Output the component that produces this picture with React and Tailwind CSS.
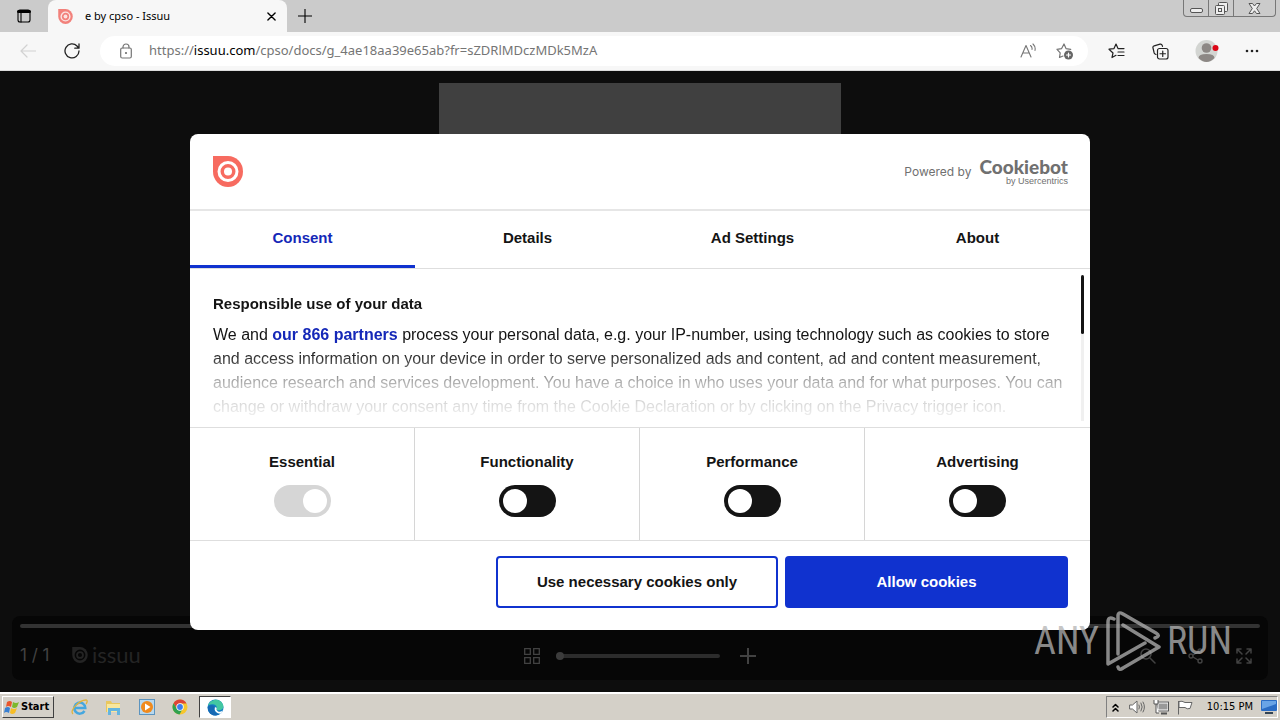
const Mark = ({ className }) => (
  <svg viewBox="0 0 30 31" className={className} fill="none" aria-hidden="true">
    <path d="M0 0h15a15 15.500 0 1 1-15 15.500z" fill="currentColor" />
    <circle cx="15" cy="15.500" r="9" stroke="var(--ring)" strokeWidth="3" />
    <circle cx="15" cy="15.500" r="4" fill="var(--ring)" />
  </svg>
)

const line = { fill: 'none', stroke: 'currentColor', strokeLinecap: 'round', strokeLinejoin: 'round' }

function TabStrip() {
  return (
    <header className="flex h-8 bg-[#cbcbcb]">
      <button aria-label="Tab actions" className="flex w-12 items-center justify-center">
        <svg viewBox="0 0 14 14" className="size-[14px]" {...line} strokeWidth="1.1">
          <rect x="1" y="1" width="12" height="12" rx="2" />
          <path d="M1.500 2.500h11" strokeWidth="3" />
          <path d="M4 4v9" />
        </svg>
      </button>
      <div className="flex w-[239px] items-center gap-3 rounded-t-lg bg-[#f7f7f7] px-[10px]">
        <Mark className="size-[15px] text-[#f2817b] [--ring:#fbe3e1]" />
        <span className="flex-1 font-['Noto_Sans',sans-serif] text-[11px]">e by cpso - Issuu</span>
        <button aria-label="Close tab" className="flex size-3 items-center justify-center">
          <svg viewBox="0 0 10 10" className="size-[9px]" {...line} strokeWidth="1.5"><path d="M1 1l8 8M9 1L1 9" /></svg>
        </button>
      </div>
      <button aria-label="New tab" className="flex w-9 items-center justify-center">
        <svg viewBox="0 0 14 14" className="size-[14px]" {...line} strokeWidth="1.1"><path d="M7 0v14M0 7h14" /></svg>
      </button>
      <div className="mr-1 ml-auto flex h-[17px] rounded-b-[4px] border border-t-0 border-[#777] text-[#555]">
        <button aria-label="Minimize" className="flex w-[25px] items-end justify-center border-r border-[#777] pb-[3px]">
          <svg viewBox="0 0 13 5" className="h-[5px] w-[13px]" fill="#eee" stroke="currentColor"><rect x=".5" y=".5" width="12" height="4" rx="1.5" /></svg>
        </button>
        <button aria-label="Restore" className="flex w-[25px] items-center justify-center border-r border-[#777]">
          <svg viewBox="0 0 13 13" className="size-[13px]" fill="#eee" stroke="currentColor"><rect x="3.500" y=".5" width="9" height="9" rx="1" /><rect x=".5" y="3.500" width="9" height="9" rx="1" /><rect x="3.500" y="6.500" width="3" height="3" /></svg>
        </button>
        <button aria-label="Close window" className="flex w-[41px] items-center justify-center">
          <svg viewBox="0 0 13 11" className="h-[11px] w-[13px]" fill="#eee" stroke="currentColor"><path d="M1 .5h3.500l2 2.500 2-2.500H12L8.700 5.500l3.300 5H8.500l-2-2.700-2 2.700H1l3.300-5z" /></svg>
        </button>
      </div>
    </header>
  )
}

function Toolbar() {
  return (
    <div className="flex h-[39px] items-center border-b border-[#dcdcdc] bg-[#f7f7f7]">
      <button aria-label="Back" className="ml-5 text-[#d2d2d2]">
        <svg viewBox="0 0 16 14" className="h-[14px] w-4" {...line} strokeWidth="1.2"><path d="M15.500 7H1M7 1L1 7l6 6" /></svg>
      </button>
      <button aria-label="Refresh" className="ml-7 text-[#222]">
        <svg viewBox="0 0 16 16" className="size-4" {...line} strokeWidth="1.3"><path d="M15 8a7 7 0 1 1-2-5l1.500 1.800M15 1v4.200h-4.200" /></svg>
      </button>
      <div className="ml-5 flex h-[30px] min-w-0 flex-1 items-center rounded-full bg-white pr-[14px] pl-5 text-[#757575]">
        <svg viewBox="0 0 12 16" className="h-4 w-3 shrink-0" {...line} strokeWidth="1.2"><rect x=".7" y="5" width="10.600" height="10" rx="1.500" /><path d="M3 5V4a3 3 0 0 1 6 0v1" /><circle cx="6" cy="10" r=".5" fill="currentColor" /></svg>
        <div className="ml-[17px] flex-1 truncate font-['Noto_Sans',sans-serif] text-[13px]">
          https://<span className="text-black">issuu.com</span>/cpso/docs/g_4ae18aa39e65ab?fr=sZDRlMDczMDk5MzA
        </div>
        <button aria-label="Read aloud">
          <svg viewBox="0 0 16 16" className="size-4" {...line} strokeWidth="1.1"><path d="M1 14L6 2.500 11 14M2.700 10h6.600M10.500 2.500a4 4 0 0 1 1.500 4M13 1a7 7 0 0 1 2 6.500" /></svg>
        </button>
        <button aria-label="Add to favorites" className="ml-5">
          <svg viewBox="0 0 18 17" className="h-[17px] w-[18px]" {...line} strokeWidth="1.200"><path d="M7 13l-3.500 1.500.7-4.700L1 6.300l4.500-.6L8 1l2 4.600 4.700.7" /><circle cx="12.500" cy="12" r="4.500" fill="#666" stroke="none" /><path d="M12.500 10v4M10.500 12h4" stroke="#fff" /></svg>
        </button>
      </div>
      <div className="ml-5 flex items-center text-[#222]">
        <button aria-label="Favorites">
          <svg viewBox="0 0 17 16" className="h-4 w-[17px]" {...line} strokeWidth="1.200"><path d="M4 14.500L5 10 1 6.200l5-.6L8 1l2 4.600h6M4 14.500l4-2.200M10 9h6M10 12.500h6" /></svg>
        </button>
        <button aria-label="Collections" className="ml-[27px]">
          <svg viewBox="0 0 17 17" className="size-[17px]" {...line} strokeWidth="1.200"><path d="M4 11.500Q2.500 11 2.200 10L1 5a1.800 1.800 0 0 1 1.200-2.200L8 1.200a1.800 1.800 0 0 1 2.200 1.200l.3 1" /><rect x="5.500" y="5.500" width="10.500" height="10.500" rx="2" /><path d="M10.750 8v5.500M8 10.750h5.500" /></svg>
        </button>
        <button aria-label="Profile" className="ml-[26px]">
          <svg viewBox="0 0 24 24" className="size-6"><circle cx="11.500" cy="12" r="11" fill="#d3d5d2" /><circle cx="11.500" cy="9" r="4.800" fill="#8d8885" /><path d="M3.500 19q0-4 8-4t8 4q-8 8-16 0z" fill="#8d8885" /><circle cx="20.500" cy="9" r="3" fill="#dc0716" /></svg>
        </button>
        <button aria-label="Settings and more" className="mr-[21px] ml-[26px]">
          <svg viewBox="0 0 14 4" className="h-1 w-[14px]" fill="currentColor"><circle cx="2" cy="2" r="1.300" /><circle cx="7" cy="2" r="1.300" /><circle cx="12" cy="2" r="1.300" /></svg>
        </button>
      </div>
    </div>
  )
}

function Viewer() {
  return (
    <div className="flex flex-1 flex-col px-3 pt-3 pb-3 text-[#424242]">
      <div className="mx-auto w-[402px] flex-1 bg-[#404040]" />
      <div className="rounded-lg bg-[#060606] px-2 pt-2 pb-3">
        <div className="h-1 rounded-full bg-[#333]" />
        <div className="flex h-10 items-end">
          <div className="flex flex-1 items-center">
            <span className="w-[52px] font-['Inter',sans-serif] text-[17px]">1 / 1</span>
            <a href="#issuu" className="flex items-center gap-1 text-[#242424] [--ring:#060606]">
              <Mark className="size-4" />
              <span className="font-['Lato',sans-serif] text-[22px] leading-6">issuu</span>
            </a>
          </div>
          <div className="flex h-6 items-center">
            <button aria-label="Show pages">
              <svg viewBox="0 0 16 16" className="size-4" fill="none" stroke="currentColor" strokeWidth="1.300"><path d="M.7.7h5.600v5.600H.7zM9.700.7h5.600v5.600H9.700zM.7 9.700h5.600v5.600H.7zM9.700 9.700h5.600v5.600H9.700z" /></svg>
            </button>
            <input aria-label="Zoom" type="range" defaultValue="0" className="mr-5 ml-4 h-1 w-[164px] appearance-none rounded-full bg-[#2c2c2c] [&::-webkit-slider-thumb]:size-2 [&::-webkit-slider-thumb]:appearance-none [&::-webkit-slider-thumb]:rounded-full [&::-webkit-slider-thumb]:bg-[#3c3c3c]" />
            <button aria-label="Zoom in">
              <svg viewBox="0 0 16 16" className="size-4" stroke="currentColor" strokeWidth="2"><path d="M8 0v16M0 8h16" /></svg>
            </button>
          </div>
          <div className="flex h-6 flex-1 items-center justify-end gap-8">
            <button aria-label="Search"><svg viewBox="0 0 16 16" className="size-4" {...line} strokeWidth="1.500"><circle cx="6" cy="6" r="5" /><path d="M10 10l5 5" /></svg></button>
            <button aria-label="Share"><svg viewBox="0 0 16 16" className="size-4" {...line} strokeWidth="1.400"><circle cx="3" cy="8" r="2" /><circle cx="12" cy="3" r="2" /><circle cx="12" cy="13" r="2" /><path d="M5 7l5-3M5 9l5 3" /></svg></button>
            <button aria-label="Full screen" className="mr-2"><svg viewBox="0 0 16 16" className="size-4" {...line} strokeWidth="1.500"><path d="M1 5V1h4M1 1l5 5M11 1h4v4M15 1l-5 5M1 11v4h4M1 15l5-5M15 11v4h-4M15 15l-5-5" /></svg></button>
          </div>
        </div>
      </div>
    </div>
  )
}

const tabs = ['Consent', 'Details', 'Ad Settings', 'About']
const groups = ['Essential', 'Functionality', 'Performance', 'Advertising']

function ConsentDialog() {
  return (
    <section role="dialog" aria-label="Cookie consent" className="w-full max-w-[900px] overflow-hidden rounded-lg bg-white font-['Liberation_Sans',Arial,sans-serif] text-[#141414]">
      <div className="flex h-[77px] items-center justify-between border-b-2 border-[#e6e6e6] pr-[22px] pl-[23px]">
        <Mark className="h-[31px] w-[30px] text-[#f76b60] [--ring:#fff]" />
        <div className="flex items-center gap-2 text-[#707070]">
          <span className="pt-[2px] font-['Inter',sans-serif] text-[12px]">Powered by</span>
          <div className="flex flex-col items-end">
            <span className="font-['Lato',sans-serif] text-[19px] leading-[19px] font-black">Cookiebot</span>
            <span className="font-['Liberation_Sans',sans-serif] text-[9px] leading-[10px]">by Usercentrics</span>
          </div>
        </div>
      </div>
      <div role="tablist" className="grid h-[58px] grid-cols-4 border-b border-[#dedede] text-[15px] font-bold">
        {tabs.map((t, i) => (
          <button key={t} role="tab" aria-selected={i === 0} className={i === 0 ? 'border-b-3 border-[#1032cf] pt-[2px] text-[#1528b8]' : 'border-b-3 border-transparent pt-[2px]'}>{t}</button>
        ))}
      </div>
      <div className="flex h-[158px] pr-[6px]">
        <div className="h-full flex-1 overflow-hidden mask-[linear-gradient(#000_52%,rgb(0_0_0/0.3)_73%,rgb(0_0_0/0.06)_94%)] pt-[23px] pr-3 pl-[23px]">
          <h2 className="text-[15px] leading-6 font-bold">Responsible use of your data</h2>
          <p className="mt-[7px] text-[16px] leading-6">
            We and <a href="#partners" className="font-bold text-[#1528b8]">our 866 partners</a> process your personal data, e.g. your IP-number, using technology such as cookies to store and access information on your device in order to serve personalized ads and content, ad and content measurement, audience research and services development. You have a choice in who uses your data and for what purposes. You can change or withdraw your consent any time from the Cookie Declaration or by clicking on the Privacy trigger icon.
          </p>
        </div>
        <div className="my-[6px] w-[3px] bg-[#f0f0f0]"><div className="h-[59px] rounded-full bg-[#141414]" /></div>
      </div>
      <div className="grid h-[114px] grid-cols-4 divide-x divide-[#d6d6d6] border-y border-[#dedede]">
        {groups.map((g, i) => (
          <label key={g} className="flex flex-col items-center gap-[14px] pt-[25px] text-[15px] leading-[18px] font-bold">
            {g}
            <input type="checkbox" role="switch" defaultChecked={i === 0} disabled={i === 0} className="flex h-8 w-[57px] appearance-none items-center rounded-full bg-[#141414] px-1 before:size-6 before:rounded-full before:bg-white checked:justify-end disabled:bg-[#d6d6d6]" />
          </label>
        ))}
      </div>
      <div className="flex h-[89px] items-start justify-end gap-[7px] pt-[15px] pr-[22px] text-[15px] font-bold">
        <button className="h-[52px] w-[282px] rounded-[4px] border-2 border-[#1032cf] pt-px">Use necessary cookies only</button>
        <button className="h-[52px] w-[283px] rounded-[4px] bg-[#1032cf] pt-px text-white">Allow cookies</button>
      </div>
    </section>
  )
}

function Watermark() {
  return (
    <div className="pointer-events-none absolute right-12 bottom-[20px] flex items-center gap-[6px] font-['Noto_Sans_ExtraCondensed','Roboto_Condensed','Open_Sans_Condensed','Liberation_Sans',sans-serif] text-[38px] leading-none text-[#b4b4b4]/75">
      <span>ANY</span>
      <svg viewBox="0 0 56 62" className="h-[62px] w-14" {...line} strokeWidth="3.500">
        <path d="M9 9Q3 6 3 12v42l37-21M13 44V6q0-5 5-2l33 19q5 3-1 5M18 15l36 22-36 21q-4 3-5-1" />
      </svg>
      <span>RUN</span>
    </div>
  )
}

const Edge = () => (
  <svg viewBox="0 0 18 18" className="size-[17px]">
    <circle cx="9" cy="9" r="8.500" fill="#137dc5" />
    <path d="M1 7C3 0 14-2 17 6c2 6-5 7-7 5 2-5-4-7-9-4z" fill="#43c7a1" />
    <path d="M10 11c1 3 5 3 7 1l-2 3.500c-4 .5-8-3-7-6.500 1-1 3 0 2 2z" fill="#fff" />
    <path d="M1 8c5-3 8 0 7 2-1 3 2 6 5 6-5 4-13 0-12-8z" fill="#1769b4" />
  </svg>
)

function Taskbar() {
  return (
    <footer className="flex h-7 items-center border-t-2 border-white bg-[#d4d0c8] pl-[2px] font-['DejaVu_Sans_Condensed','DejaVu_Sans',sans-serif] text-[11px] text-black">
      <button className="flex h-[22px] w-[52px] items-center gap-px border border-t-white border-r-[#404040] border-b-[#404040] border-l-white pl-px text-[11px] font-bold">
        <svg viewBox="0 0 16 15" className="h-[15px] w-4 shrink-0"><path d="M3 2q3-2 5 0L7 7Q4 5 2 7z" fill="#e9552b" /><path d="M9 2q3 2 6 0l-2 5q-3 2-5 0z" fill="#7db82b" /><path d="M1 8q3-2 5 0l-1 5q-3-2-5 0z" fill="#3980d2" /><path d="M7 8q3 2 6 0l-2 5q-3 2-5 0z" fill="#f7bd25" /></svg>
        Start
      </button>
      <div className="ml-[17px] flex items-center gap-[17px]">
        <button aria-label="Internet Explorer">
          <svg viewBox="0 0 17 17" className="size-[17px]" fill="none"><path d="M13.500 12a5.500 5.500 0 1 1 .8-3H4" stroke="#45a7df" strokeWidth="2.500" /><path d="M2 15C-2 12 8 1 15 1c2 0 1 3 0 4" stroke="#e0b33c" strokeWidth="1.300" /></svg>
        </button>
        <button aria-label="Explorer">
          <svg viewBox="0 0 17 17" className="size-[17px]"><path d="M1 2h5l1 2h8v9H1z" fill="#e9c75e" /><path d="M2 5h13v8H2z" fill="#f8e79d" /><path d="M3 9h12v7h-3v-4H6v4H3z" fill="#64b5df" /></svg>
        </button>
        <button aria-label="Media Player">
          <svg viewBox="0 0 16 16" className="size-4"><rect x=".5" y=".5" width="15" height="15" fill="#b8d8ee" stroke="#5c94bf" /><circle cx="8" cy="8" r="6" fill="#f08a1d" /><path d="M6 4.500l5.500 3.500L6 11.500z" fill="#fff" /></svg>
        </button>
        <button aria-label="Chrome">
          <svg viewBox="0 0 16 16" className="size-4"><circle cx="8" cy="8" r="7.500" fill="#f6c62d" /><path d="M1.500 4.200A7.500 7.500 0 0 1 14.500 4.500H8L5 10z" fill="#dc4437" /><path d="M1.500 4.200L5 10l5 1-2.500 4.500A7.500 7.500 0 0 1 1.500 4.200z" fill="#2fa150" /><circle cx="8" cy="8" r="3.700" fill="#fff" /><circle cx="8" cy="8" r="2.900" fill="#3b7ded" /></svg>
        </button>
      </div>
      <button aria-label="Edge" className="ml-[11px] flex h-[22px] w-8 items-center justify-center border border-t-[#404040] border-r-white border-b-white border-l-[#404040] bg-white"><Edge /></button>
      <div className="mr-[2px] ml-auto flex h-[22px] items-center border border-t-[#808080] border-r-white border-b-white border-l-[#808080] pl-[5px]">
        <button aria-label="Show hidden icons"><svg viewBox="0 0 7 9" className="h-[9px] w-[7px]" {...line} strokeWidth="1.500"><path d="M1 4l2.500-2.500L6 4M1 8l2.500-2.500L6 8" /></svg></button>
        <svg viewBox="0 0 16 14" className="ml-[10px] h-[14px] w-4" {...line} stroke="#666"><path d="M1 5h2.500L8 1v12L3.500 9H1z" fill="#fff" /><path d="M10 5q1 2 0 4M12 3q2.500 4 0 8M14 2q3 5 0 10" /></svg>
        <svg viewBox="0 0 16 16" className="ml-2 size-4" stroke="#555"><rect x="4.500" y="3.500" width="11" height="8" fill="#999" stroke="#fff" strokeWidth="2" /><rect x="4" y="3" width="11.500" height="9" fill="none" /><path d="M8 14.500h6" strokeWidth="2" /><path d="M1 1v4h4V1M3 5v9h3" fill="#fff" /></svg>
        <svg viewBox="0 0 16 15" className="ml-2 h-[15px] w-4" stroke="#666" fill="#fff"><path d="M1.500 1v13.500M2 1.500q3-1 6 1h7l-2 6q-3 1-5-1H2z" /></svg>
        <span className="ml-[14px]">10:15 PM</span>
        <svg viewBox="0 0 16 14" className="ml-2 h-[14px] w-4"><rect width="16" height="11" rx="1" fill="#2a6cc4" /><path d="M1 1h14v3L1 9z" fill="#69a4e6" /><path d="M4 12h8v2H4z" fill="#345" /></svg>
      </div>
    </footer>
  )
}

export default function App() {
  return (
    <div className="flex min-h-screen flex-col bg-[#0d0d0d]">
      <TabStrip />
      <Toolbar />
      <main className="relative flex flex-1 flex-col">
        <Viewer />
        <div className="absolute inset-0 flex items-center justify-center"><ConsentDialog /></div>
        <Watermark />
      </main>
      <Taskbar />
    </div>
  )
}
